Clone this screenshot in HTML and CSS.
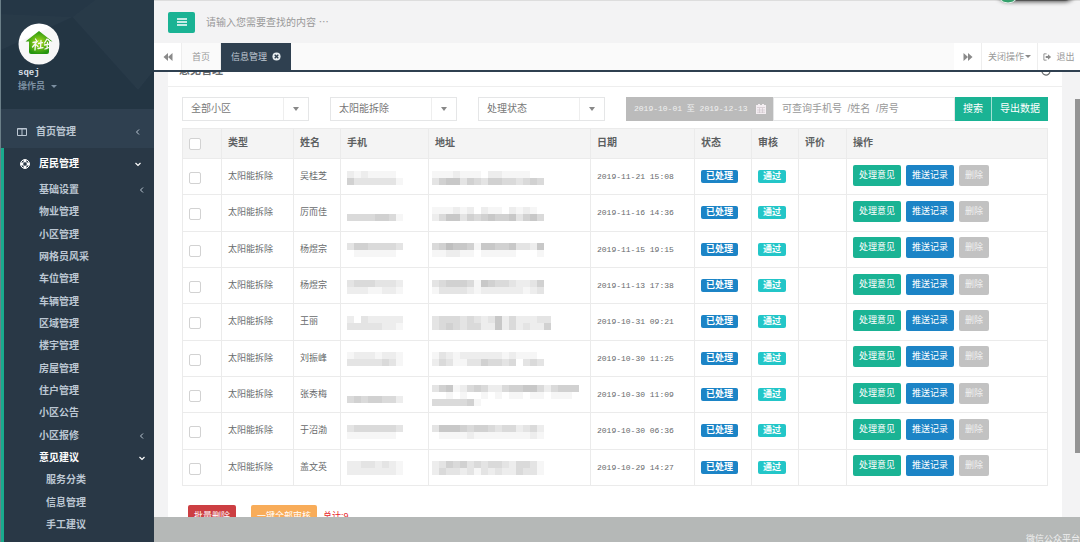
FILE: index.html
```html
<!DOCTYPE html>
<html lang="zh-CN">
<head>
<meta charset="utf-8">
<title>信息管理</title>
<link rel="stylesheet" href="styles.css">
</head>
<body>
<aside class="sidebar">
  <div class="profile">
    <svg class="facets" viewBox="0 0 154 109" preserveAspectRatio="none" aria-hidden="true"><path d="M0 14L72 17L95 0H154V70L138 90L72 17L0 50Z" fill="#fff" opacity=".015"/><path d="M72 17L138 90L154 70V109H0V50Z" fill="#000" opacity=".03"/></svg>
    <svg class="logo" viewBox="0 0 42 42" role="img" aria-label="logo">
      <defs><radialGradient id="house"><stop offset="0" stop-color="#b4e61e"/><stop offset="1" stop-color="#279a10"/></radialGradient></defs>
      <circle cx="21" cy="21" r="20.5" fill="#fff"/>
      <path d="M21 8L34.500 18.500H31V29Q31 31 29 31H13Q11 31 11 29V18.500H7.500Z" fill="url(#house)"/>
      <path d="M17.500 16l1 1.500M15 19.500l4-1-4.500 5.500M17.500 20.500l-.5 6.500M18.500 22l1.500 1.500M20.500 20.500l4-.8M23 17.500l-.5 7.500M20 25.500l5-.8M29 16l-2.500 4M30 16.500l3 3M26.500 22l6-1M29.500 19.500l-.5 6M27 26l4-1.500M33 19v3.500" fill="none" stroke="#fff" stroke-width="1.300" stroke-linecap="round"/>
    </svg>
    <strong class="user">sqej</strong>
    <button class="role" type="button">操作员 <svg class="caret" viewBox="0 0 6 4"><path d="M0 0H6L3 3Z" fill="currentColor"/></svg></button>
  </div>
  <nav class="nav">
    <a class="nav-top" href="#"><svg class="nav-icon" viewBox="0 0 10 10"><path d="M.5 1.5H9.5V8.5H.5ZM5 1.500V8.500M.5 2H9.500" fill="none" stroke="currentColor"/></svg>首页管理<svg class="arrow" viewBox="0 0 6 6"><path d="M4 .5L1.500 3L4 5.500" fill="none" stroke="currentColor"/></svg></a>
    <div class="nav-group">
      <a class="nav-top nav-open" href="#"><svg class="nav-icon" viewBox="0 0 10 10"><circle cx="5" cy="5" r="4.400" fill="none" stroke="currentColor" stroke-width="1"/><path d="M5 .5V3M5 7V9.500M.5 5H3M7 5H9.500" stroke="currentColor" stroke-width="2.800"/><circle cx="5" cy="5" r="2.200" fill="none" stroke="currentColor" stroke-width=".7"/></svg>居民管理<svg class="arrow" viewBox="0 0 6 6"><path d="M.5 2L3 4.500L5.500 2" fill="none" stroke="currentColor" stroke-width="1.200"/></svg></a>
      <ul class="subnav">
        <li><a href="#">基础设置<svg class="arrow" viewBox="0 0 6 6"><path d="M4 .5L1.500 3L4 5.500" fill="none" stroke="currentColor"/></svg></a></li>
        <li><a href="#">物业管理</a></li>
        <li><a href="#">小区管理</a></li>
        <li><a href="#">网格员风采</a></li>
        <li><a href="#">车位管理</a></li>
        <li><a href="#">车辆管理</a></li>
        <li><a href="#">区域管理</a></li>
        <li><a href="#">楼宇管理</a></li>
        <li><a href="#">房屋管理</a></li>
        <li><a href="#">住户管理</a></li>
        <li><a href="#">小区公告</a></li>
        <li><a href="#">小区报修<svg class="arrow" viewBox="0 0 6 6"><path d="M4 .5L1.500 3L4 5.500" fill="none" stroke="currentColor"/></svg></a></li>
        <li><a class="nav-open" href="#">意见建议<svg class="arrow" viewBox="0 0 6 6"><path d="M.5 2L3 4.500L5.500 2" fill="none" stroke="currentColor" stroke-width="1.200"/></svg></a></li>
        <li class="third"><a href="#">服务分类</a></li>
        <li class="third"><a href="#">信息管理</a></li>
        <li class="third"><a href="#">手工建议</a></li>
      </ul>
    </div>
  </nav>
</aside>
<div class="main">
  <header class="topbar">
    <button class="menu-btn" type="button" aria-label="菜单"><svg viewBox="0 0 10 8"><path d="M0 1H10M0 4H10M0 7H10" stroke="#fff" stroke-width="1.500"/></svg></button>
    <input class="top-search" type="text" aria-label="搜索内容" placeholder="请输入您需要查找的内容 ⋯">
    <div class="float-widget"><svg viewBox="0 0 24 24"><circle cx="12" cy="12" r="11" fill="#35a06c" stroke="#e4f1ea"/></svg></div>
  </header>
  <div class="tabs">
    <button class="tab-btn" type="button" aria-label="向左"><svg viewBox="0 0 10 8"><path d="M5 0V8L.5 4ZM9.500 0V8L5 4Z" fill="currentColor"/></svg></button>
    <a class="tab" href="#">首页</a>
    <a class="tab tab-active" href="#">信息管理<svg viewBox="0 0 10 10"><circle cx="5" cy="5" r="4.500" fill="#e8edf1"/><path d="M3 3L7 7M7 3L3 7" stroke="#2f4050" stroke-width="1.500"/></svg></a>
    <span class="tab-space"></span>
    <button class="tab-btn tab-next" type="button" aria-label="向右"><svg viewBox="0 0 10 8"><path d="M.5 0V8L5 4ZM5 0V8L9.500 4Z" fill="currentColor"/></svg></button>
    <button class="tab-btn tab-close" type="button">关闭操作<svg class="caret" viewBox="0 0 6 4"><path d="M0 0H6L3 3Z" fill="currentColor"/></svg></button>
    <a class="tab-btn tab-exit" href="#"><svg viewBox="0 0 10 8"><path d="M4 .5H1V7.500H4" fill="none" stroke="currentColor"/><path d="M3 3H5.500V1L9 4L5.500 7V5H3Z" fill="currentColor"/></svg>退出</a>
  </div>
  <main class="content">
    <section class="panel">
      <div class="panel-head"><h1>意见管理</h1><svg class="refresh" viewBox="0 0 10 10"><path d="M9 5A4 4 0 1 1 7.800 2.200M8.500 0V3H5.500" fill="none" stroke="currentColor" stroke-width="1.200"/></svg></div>
      <div class="panel-body">
        <form class="filters">
          <div class="select"><select aria-label="小区"><option>全部小区</option></select><svg viewBox="0 0 6 4"><path d="M0 0H6L3 4Z" fill="#888"/></svg></div>
          <div class="select"><select aria-label="类型"><option>太阳能拆除</option></select><svg viewBox="0 0 6 4"><path d="M0 0H6L3 4Z" fill="#888"/></svg></div>
          <div class="select"><select aria-label="状态"><option>处理状态</option></select><svg viewBox="0 0 6 4"><path d="M0 0H6L3 4Z" fill="#888"/></svg></div>
          <div class="search-group">
            <div class="range"><input type="text" aria-label="日期范围" value="2019-10-01 至 2019-12-13"><svg viewBox="0 0 10 10"><path d="M0 1H2V0H4V1H6V0H8V1H10V10H0Z" fill="#f4eef2"/><path d="M1 3.500H9M1 6H9M1 8.200H9M3.500 4V9M6.500 4V9" stroke="#cbbfc6" stroke-width=".6"/></svg></div>
            <input class="keyword" type="text" aria-label="关键词" placeholder="可查询手机号  /姓名  /房号">
            <button class="btn-search" type="button">搜索</button>
            <button class="btn-search" type="button">导出数据</button>
          </div>
        </form>
        <table class="records">
          <colgroup><col class="c-check"><col class="c-type"><col class="c-name"><col class="c-phone"><col class="c-addr"><col class="c-date"><col class="c-state"><col class="c-audit"><col class="c-rate"><col></colgroup>
          <thead><tr><th><input type="checkbox" aria-label="全选"></th><th>类型</th><th>姓名</th><th>手机</th><th>地址</th><th>日期</th><th>状态</th><th>审核</th><th>评价</th><th>操作</th></tr></thead>
          <tbody id="rows"></tbody>
        </table>
        <div class="bulk">
          <button class="btn btn-red" type="button">批量删除</button>
          <button class="btn btn-orange" type="button">一键全部审核</button>
          <span class="total">总计:9</span>
        </div>
      </div>
    </section>
    <div class="scroll-thumb"></div>
  </main>
  <footer class="footer">微信公众平台</footer>
</div>
<script src="app.js"></script>
</body>
</html>
```
FILE: styles.css
```css
* { box-sizing: border-box; }
body {
  margin: 0;
  height: 100vh;
  display: flex;
  overflow: hidden;
  font: 10px/14px "Liberation Sans", "Noto Sans CJK SC", sans-serif;
  color: #676a6c;
  background: #f3f3f4;
}
a { color: inherit; text-decoration: none; }
button, input, select { font: inherit; color: inherit; margin: 0; border: 0; padding: 0; background: none; border-radius: 0; }
svg { display: block; flex: none; }
.caret { width: 6px; height: 4px; }

.sidebar {
  flex: none;
  width: 154px;
  display: flex;
  flex-direction: column;
  background: #2f4050;
  color: #bcc7d3;
  font-weight: bold;
  border-left: 1px solid #6b7f88;
}
.profile {
  position: relative;
  height: 109px;
  padding: 23px 17px 0;
  background: #253746;
  display: flex;
  flex-direction: column;
  align-items: flex-start;
}
.facets { position: absolute; left: 0; top: 0; width: 100%; height: 100%; }
.logo { width: 42px; height: 42px; }
.user { margin-top: 2px; font: bold 9px/13px "Liberation Mono", monospace; color: #dfe4ed; }
.role { display: flex; align-items: center; gap: 6px; font-size: 9px; line-height: 13px; color: #8095a8; }
.nav { flex: 1; display: flex; flex-direction: column; min-height: 0; }
.nav-top { display: flex; align-items: center; height: 31px; padding: 0 13px 0 16px; }
.nav > .nav-top { height: 39px; padding-top: 6px; }
.nav-icon { width: 10px; height: 10px; margin-right: 9px; }
.arrow { width: 6px; height: 6px; margin-left: auto; }
.nav-group { flex: 1; display: flex; flex-direction: column; background: #293846; border-left: 3px solid #19aa8d; padding-bottom: 6px; }
.nav-open { color: #fff; }
.subnav { flex: 1; list-style: none; margin: 0; padding: 0; display: flex; flex-direction: column; }
.subnav li { flex: 1; display: flex; align-items: center; padding: 0 9px 0 35px; }
.subnav a { flex: 1; display: flex; align-items: center; }
.subnav .third { padding-left: 42px; }

.main { flex: 1; min-width: 0; display: flex; flex-direction: column; }
.topbar { position: relative; height: 43px; padding: 0 14px; display: flex; align-items: center; gap: 11px; border-top: 1px solid #ddd; }
.menu-btn { width: 27px; height: 21px; border-radius: 2px; background: #1ab394; display: flex; align-items: center; justify-content: center; }
.menu-btn svg { width: 10px; height: 8px; }
.top-search { width: 200px; height: 22px; }
.top-search::placeholder, .keyword::placeholder { color: #999; opacity: 1; }
.float-widget { position: absolute; right: 6px; top: -21px; width: 78px; height: 21px; background: #555; border-radius: 10px; box-shadow: 1px 1px 4px #555; }
.float-widget svg { width: 24px; height: 24px; }

.tabs { height: 29px; display: flex; background: #fafafa; border-bottom: 2px solid #2f4050; color: #999; font-size: 9px; }
.tab, .tab-btn { display: flex; align-items: center; justify-content: center; background: #fff; border-right: 1px solid #eee; white-space: nowrap; }
.tab-btn { width: 28px; }
.tab-btn svg { width: 10px; height: 8px; color: #8a8a8a; }
.tab { padding: 0 10px; background: #fafafa; }
.tab-active { gap: 5px; background: #2f4050; color: #c0cad4; border: 0; }
.tab-active svg { width: 9px; height: 9px; }
.tab-space { flex: 1; }
.tab-btn.tab-close { width: 56px; gap: 1px; }
.tab-btn.tab-close svg { width: 6px; height: 4px; }
.tab-btn.tab-exit { width: 42px; gap: 4px; border: 0; }
.tab-exit svg { width: 9px; }

.content { position: relative; flex: 1; min-height: 0; overflow: hidden; padding: 0 18px 0 14px; }
.panel { margin-top: -10px; min-height: 100%; background: #fff; padding-bottom: 24px; }
.panel-head { height: 25px; padding: 0 11px; display: flex; justify-content: space-between; border-bottom: 1px solid #eee; }
.panel-head h1 { margin: 0; font-size: 11px; line-height: 16px; }
.refresh { width: 10px; height: 10px; margin-top: 4px; }
.panel-body { padding: 10px 14px 0; }
.filters { display: flex; gap: 21px; height: 24px; }
.select { position: relative; width: 127px; border: 1px solid #e5e6e7; color: #777; }
.select select { appearance: none; width: 100%; height: 22px; padding: 0 8px; outline: 0; background: linear-gradient(#eee, #eee) right 24px top / 1px 100% no-repeat; }
.select svg { position: absolute; right: 9px; top: 9px; width: 6px; height: 4px; pointer-events: none; }
.search-group { flex: 1; display: flex; min-width: 0; }
.range { width: 147px; padding: 0 7px 0 8px; display: flex; align-items: center; gap: 4px; background: #bbb; color: #f1f1f1; }
.range input { flex: 1; min-width: 0; font: 8px/14px "Liberation Mono", "Noto Sans CJK SC", monospace; }
.range svg { width: 10px; height: 10px; }
.keyword { flex: 1; min-width: 0; padding: 0 8px; border: 1px solid #e5e6e7; white-space: pre; }
.keyword::placeholder { white-space: pre; }
.btn-search { padding: 0 8px; background: #1ab394; color: #fff; }
.btn-search + .btn-search { border-left: 1px solid #a3e1d4; }

.records { width: 100%; height: 358px; margin-top: 7px; table-layout: fixed; border-collapse: collapse; font-size: 9px; }
.records th, .records td { border: 1px solid #ebebeb; padding: 0 6px; text-align: left; vertical-align: middle; line-height: 13px; }
.records th { height: 30px; padding-bottom: 2px; background: #f4f4f4; font-size: 10px; color: #5c5f61; }
.c-check { width: 39px; }
.c-type { width: 72px; }
.c-name { width: 47px; }
.c-phone { width: 88px; }
.c-addr { width: 162px; }
.c-date { width: 104px; }
.c-state { width: 57px; }
.c-audit { width: 47px; }
.c-rate { width: 48px; }
.records input { appearance: none; display: block; width: 12px; height: 12px; margin-top: 3px; border: 1px solid #d2d2d2; border-radius: 2px; background: #fff; }
.records .date { font: 8px/13px "Liberation Mono", monospace; white-space: nowrap; }
.records .masked { padding: 2px 2px 0 6px; }
.records .masked-addr { padding-left: 3px; }
.tag { display: inline-block; padding: 0 5px; border-radius: 2px; color: #fff; font-weight: bold; line-height: 13px; white-space: nowrap; }
.tag-blue { background: #1c84c6; }
.tag-cyan { background: #23c6c8; }
.actions { display: flex; gap: 5px; padding-bottom: 3px; }
.btn { height: 21px; padding: 0 6px; border-radius: 2px; color: #fff; font-size: 9px; white-space: nowrap; }
.btn-green { background: #1ab394; }
.btn-blue { background: #1c84c6; }
.btn-grey { background: #c2c2c2; color: #f1f1f1; }
.btn-red { background: #cc3e42; }
.btn-orange { background: #f8ac59; }
.bulk { display: flex; align-items: center; margin-top: 19px; padding-left: 6px; }
.bulk .btn-orange { margin-left: 15px; }
.total { margin-left: 6px; color: #e8262b; font-size: 9px; }
.scroll-thumb { position: absolute; right: 0; top: 27px; width: 5px; height: 354px; background: #949494; }
.footer { height: 25px; padding-top: 15px; overflow: hidden; text-align: right; background: #b5b8b7; color: #f0f0f0; font-size: 9px; }
```
FILE: app.js
```js
// Each digit is the darkness of one block of a masked value; "/" starts a new line of blocks.
const records = [
  ["吴桂芝", "2019-11-21 15:08", "21211110/53333331", "1112111022111100/3566354355443454"],
  ["厉而佳", "2019-11-16 14:36", "00000000/44445541", "1112120211021210/2466354565563564"],
  ["杨煜宗", "2019-11-15 19:15", "35544443/01111110", "4576651665563326/1122110111110001"],
  ["杨煜宗", "2019-11-13 17:38", "34443332/22211221", "3455541654432235/1333321222222123"],
  ["王丽", "2019-10-31 09:21", "20322222/33333221", "34443432362422233/34543442262423225"],
  ["刘振峰", "2019-10-30 11:25", "12221221/33333431", "1321222222121110/2431133544340343"],
  ["张秀梅", "2019-10-30 11:09", "00000000/45455442", "356124542245566424555/001010010101101101110/444445100000000000000"],
  ["于沼渤", "2019-10-30 06:36", "34444443/11111110", "3666545543442342/0111121111111121"],
  ["盖文英", "2019-10-29 14:27", "22332321/22222221", "2354534344324431/2433231323224331"]
];

function mosaic(levels) {
  const lines = levels.split("/");
  const w = lines[0].length * 7, h = lines.length * 7;
  const blocks = lines.map((line, y) => [...line].map((n, x) =>
    `<rect x="${x * 7}" y="${y * 7}" width="7" height="7" fill-opacity="${n * 0.045}"/>`).join("")).join("");
  return `<svg width="${w}" height="${h}" fill="#333" shape-rendering="crispEdges" aria-hidden="true">${blocks}</svg>`;
}

document.getElementById("rows").innerHTML = records.map(([name, date, phone, addr]) => `
  <tr>
    <td><input type="checkbox" aria-label="选择 ${name}"></td>
    <td>太阳能拆除</td>
    <td>${name}</td>
    <td class="masked">${mosaic(phone)}</td>
    <td class="masked masked-addr">${mosaic(addr)}</td>
    <td class="date">${date}</td>
    <td><span class="tag tag-blue">已处理</span></td>
    <td><span class="tag tag-cyan">通过</span></td>
    <td></td>
    <td><div class="actions">
      <button class="btn btn-green" type="button">处理意见</button>
      <button class="btn btn-blue" type="button">推送记录</button>
      <button class="btn btn-grey" type="button">删除</button>
    </div></td>
  </tr>`).join("");
```
